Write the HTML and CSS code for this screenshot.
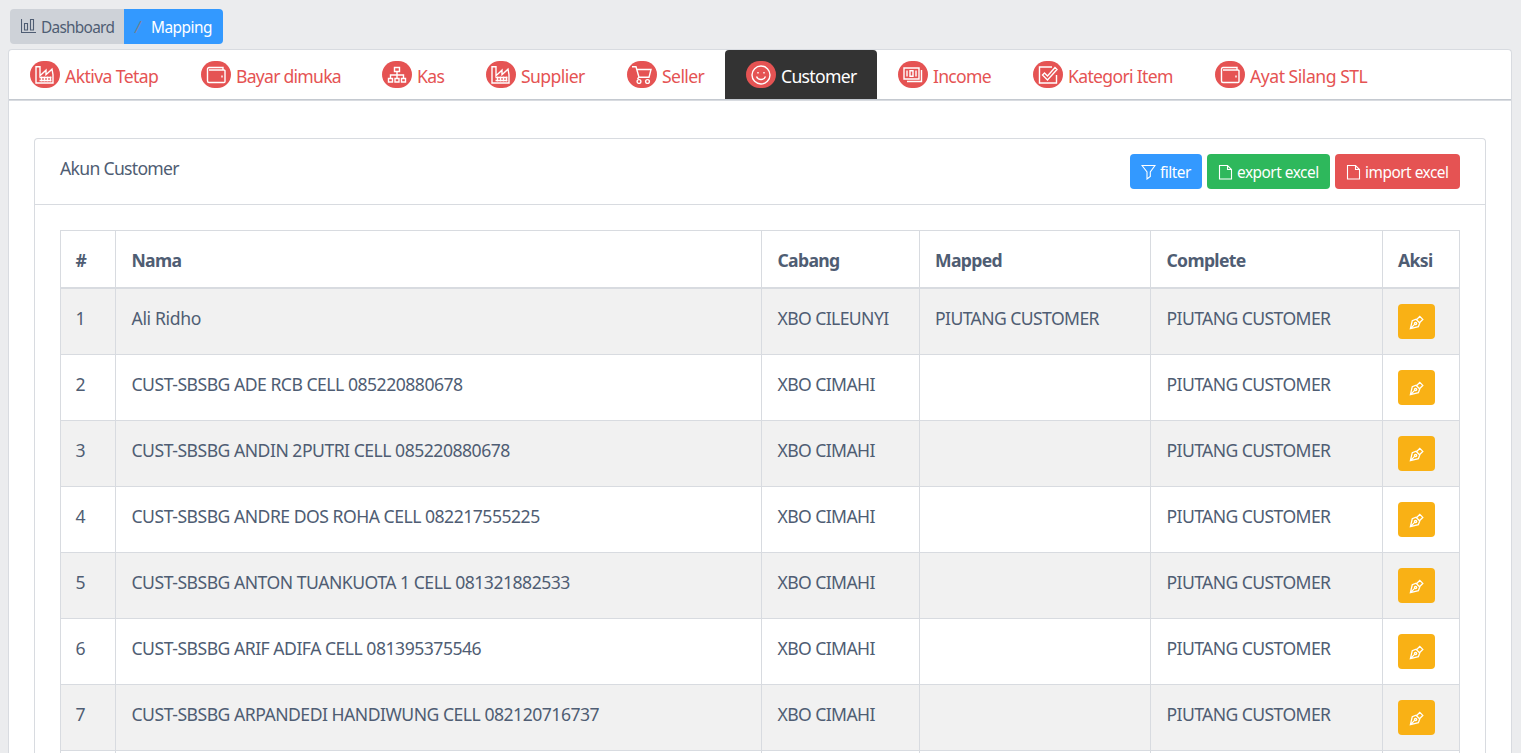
FILE: index.html
```html
<!DOCTYPE html>
<html lang="id">
<head>
<meta charset="utf-8">
<title>Mapping</title>
<link rel="stylesheet" href="styles.css">
</head>
<body>
<svg class="sprite" aria-hidden="true">
  <symbol id="factory" viewBox="0 0 20 18"><path d="M1 17V.7h4v9l6-5.500v4.500l6-5.500 1 5.500v8.300zM4.500 11.500h12M4.500 14.500h12M6.500 10.500v5M9.500 10.500v5M12.500 10.500v5M15.500 10.500v5"/></symbol>
  <symbol id="wallet" viewBox="0 0 20 18"><path d="M17 4V1.500H3A1.500 1.500 0 0 0 1.500 3v12A1.500 1.500 0 0 0 3 16.500h15a1 1 0 0 0 1-1V5a1 1 0 0 0-1-1H3M16 9.500v2"/></symbol>
  <symbol id="tree" viewBox="0 0 20 18"><path d="M7.500 1.500h5v4h-5zM10 6v6M3.500 12V9h13v3M1.500 12.500h4v3.500h-4zM8 12.500h4v3.500H8zM14.500 12.500h4v3.500h-4z"/></symbol>
  <symbol id="cart" viewBox="0 0 20 18"><path d="M0 .8h4l3 10.500h10l2-7.800H5M7 11l-1.500 2"/><circle cx="7" cy="15.500" r="1.900"/><circle cx="15.500" cy="15.500" r="1.900"/></symbol>
  <symbol id="smile" viewBox="0 0 20 20"><circle cx="10" cy="10" r="9"/><path d="M5.500 11.500c1.500 4 7.500 4 9 0M7 7v1.500M13 7v1.500"/></symbol>
  <symbol id="money" viewBox="0 0 20 18"><path d="M1 2h15v11H1zM18.500 4v11.500H4M4 4.500v6M13 4.500v6M7 4.800h3v5.400H7z"/></symbol>
  <symbol id="check" viewBox="0 0 20 18"><path d="M14 1H1.500v16h17V9M4.500 9l2-2 3 3 7.500-8.500 2 2L9.500 14z"/></symbol>
  <symbol id="chart" viewBox="0 0 16 15"><path d="M.5 0v13.500H15M3.500 4.500h3V11h-3zM9.500.5h3V11h-3z"/></symbol>
  <symbol id="funnel" viewBox="0 0 15 16"><path d="M1 1.500h13L9.300 8v4.500L6 15V8z"/></symbol>
  <symbol id="file" viewBox="0 0 15 16"><path d="M1.500 1.500h8l4 4v9.500h-12zM9.500 1.500v4h4"/></symbol>
  <symbol id="pen" viewBox="0 0 16 16"><path d="M1.500 14.500l2-8.500 4-1.500 4 4-1.500 4zM1.500 14.500l4.500-4.500M8.500 4.500l3-3 3.200 3.200-3 3"/><circle cx="7" cy="9" r="1.200"/></symbol>
</svg>
<nav class="crumbs">
  <a class="crumb"><svg class="crumb-icon"><use href="#chart"/></svg><span>Dashboard</span></a>
  <a class="crumb current"><i>/</i><span>Mapping</span></a>
</nav>
<main class="panel">
  <ul class="tabs">
    <li class="tab t1"><b class="badge"><svg><use href="#factory"/></svg></b><span>Aktiva Tetap</span></li>
    <li class="tab t2"><b class="badge"><svg><use href="#wallet"/></svg></b><span>Bayar dimuka</span></li>
    <li class="tab t3"><b class="badge"><svg><use href="#tree"/></svg></b><span>Kas</span></li>
    <li class="tab t4"><b class="badge"><svg><use href="#factory"/></svg></b><span>Supplier</span></li>
    <li class="tab t5"><b class="badge"><svg><use href="#cart"/></svg></b><span>Seller</span></li>
    <li class="tab t6 active"><b class="badge"><svg class="round"><use href="#smile"/></svg></b><span>Customer</span></li>
    <li class="tab t7"><b class="badge"><svg><use href="#money"/></svg></b><span>Income</span></li>
    <li class="tab t8"><b class="badge"><svg><use href="#check"/></svg></b><span>Kategori Item</span></li>
    <li class="tab t9"><b class="badge"><svg><use href="#wallet"/></svg></b><span>Ayat Silang STL</span></li>
  </ul>
  <section class="card">
    <header class="card-head">
      <h1>Akun Customer</h1>
      <div class="actions">
        <button class="btn blue"><svg><use href="#funnel"/></svg><span>filter</span></button>
        <button class="btn green"><svg><use href="#file"/></svg><span>export excel</span></button>
        <button class="btn red"><svg><use href="#file"/></svg><span>import excel</span></button>
      </div>
    </header>
    <table>
      <colgroup><col class="c-no"><col class="c-name"><col class="c-branch"><col class="c-mapped"><col class="c-complete"><col class="c-action"></colgroup>
      <thead><tr><th>#</th><th>Nama</th><th>Cabang</th><th>Mapped</th><th>Complete</th><th>Aksi</th></tr></thead>
      <tbody>
        <tr><td>1</td><td class="person">Ali Ridho</td><td>XBO CILEUNYI</td><td>PIUTANG CUSTOMER</td><td>PIUTANG CUSTOMER</td><td><button class="edit"><svg><use href="#pen"/></svg></button></td></tr>
        <tr><td>2</td><td>CUST-SBSBG ADE RCB CELL 085220880678</td><td>XBO CIMAHI</td><td></td><td>PIUTANG CUSTOMER</td><td><button class="edit"><svg><use href="#pen"/></svg></button></td></tr>
        <tr><td>3</td><td>CUST-SBSBG ANDIN 2PUTRI CELL 085220880678</td><td>XBO CIMAHI</td><td></td><td>PIUTANG CUSTOMER</td><td><button class="edit"><svg><use href="#pen"/></svg></button></td></tr>
        <tr><td>4</td><td>CUST-SBSBG ANDRE DOS ROHA CELL 082217555225</td><td>XBO CIMAHI</td><td></td><td>PIUTANG CUSTOMER</td><td><button class="edit"><svg><use href="#pen"/></svg></button></td></tr>
        <tr><td>5</td><td>CUST-SBSBG ANTON TUANKUOTA 1 CELL 081321882533</td><td>XBO CIMAHI</td><td></td><td>PIUTANG CUSTOMER</td><td><button class="edit"><svg><use href="#pen"/></svg></button></td></tr>
        <tr><td>6</td><td>CUST-SBSBG ARIF ADIFA CELL 081395375546</td><td>XBO CIMAHI</td><td></td><td>PIUTANG CUSTOMER</td><td><button class="edit"><svg><use href="#pen"/></svg></button></td></tr>
        <tr><td>7</td><td>CUST-SBSBG ARPANDEDI HANDIWUNG CELL 082120716737</td><td>XBO CIMAHI</td><td></td><td>PIUTANG CUSTOMER</td><td><button class="edit"><svg><use href="#pen"/></svg></button></td></tr>
        <tr class="last"><td></td><td></td><td></td><td></td><td></td><td></td></tr>
      </tbody>
    </table>
  </section>
</main>
</body>
</html>
```
FILE: styles.css
```css
* { box-sizing: border-box; }
html { height: 100%; overflow: hidden; }
body {
  margin: 0;
  height: 753px;
  overflow: hidden;
  padding: 9px 9px 0 8px;
  background: #ebecee;
  color: #4f5d73;
  font-family: "Noto Sans", "Open Sans", sans-serif;
  font-size: 17.6px;
  letter-spacing: -.5px;
}
.sprite { display: none; }
svg { fill: none; stroke: currentColor; flex: none; }
button { border: 0; font-family: inherit; }
.crumbs {
  display: flex;
  width: 213px;
  height: 35px;
  margin-left: 2px;
  border-radius: 4px;
  overflow: hidden;
  font-size: 15.4px;
}
.crumb {
  display: flex;
  align-items: center;
  width: 114px;
  padding: 1px 0 0 11px;
  background: #ced2d8;
  letter-spacing: -.72px;
  white-space: nowrap;
}
.crumb-icon { width: 16px; height: 15px; margin: -1px 4px 0 0; stroke-width: 1.1; }
.crumb.current { width: 99px; background: #39f; color: #fff; letter-spacing: -.5px; }
.crumb i { width: 16px; color: #768192; }
.panel {
  height: 704px;
  margin-top: 5px;
  border: 1px solid #d8dbe0;
  border-bottom: 0;
  border-radius: 4px 4px 0 0;
  background: #fff;
}
.tabs {
  display: flex;
  height: 51px;
  margin: 0;
  padding: 0;
  list-style: none;
  border-bottom: 1px solid #d8dbe0;
  box-shadow: inset 0 -1px #c4c9d0;
  color: #e55353;
}
.tab {
  display: flex;
  align-items: center;
  height: 49px;
  padding: 0 0 0 21px;
  letter-spacing: -.6px;
  white-space: nowrap;
}
.tab span { padding-top: 3px; }
.t1 { width: 171px; }
.t2 { width: 181px; letter-spacing: -.75px; }
.t3 { width: 104px; }
.t4 { width: 141px; }
.t5 { width: 119px; }
.t6 { width: 152px; letter-spacing: -.7px; }
.t7 { width: 135px; letter-spacing: -.75px; }
.t8 { width: 182px; letter-spacing: -.68px; }
.t9 { width: 195px; letter-spacing: -.48px; }
.tab.active { background: #333; color: #fff; border-radius: 4px 4px 0 0; }
.badge {
  display: flex;
  align-items: center;
  justify-content: center;
  width: 30px;
  height: 27px;
  margin-right: 5px;
  border-radius: 14px;
  background: #e55353;
  color: #fff;
}
.badge svg { width: 20px; height: 18px; stroke-width: 1.4; }
.badge .round { height: 20px; }
.card {
  width: 1452px;
  height: 615px;
  margin: 37px 0 0 25px;
  border: 1px solid #d8dbe0;
  border-bottom: 0;
  border-radius: 4px 4px 0 0;
}
.card-head {
  display: flex;
  justify-content: space-between;
  height: 66px;
  padding: 15px 25px 0;
  border-bottom: 1px solid #d8dbe0;
}
h1 { margin: 0; font-size: 17.6px; font-weight: 400; line-height: 28px; letter-spacing: -.7px; }
.actions { display: flex; gap: 5px; }
.btn {
  display: flex;
  align-items: center;
  height: 35px;
  padding: 0 0 0 11px;
  border-radius: 4px;
  color: #fff;
  font-size: 15.4px;
  letter-spacing: -.48px;
  white-space: nowrap;
}
.btn svg { width: 15px; height: 16px; margin-right: 4px; stroke-width: 1.1; }
.btn span { padding-top: 1px; }
.blue { width: 72px; background: #39f; }
.green { width: 123px; background: #2eb85c; }
.red { width: 125px; background: #e55353; }
table {
  width: 1400px;
  margin: 25px 0 0 25px;
  table-layout: fixed;
  border-collapse: separate;
  border-spacing: 0;
  border: solid #d8dbe0;
  border-width: 1px 0 0 1px;
}
.c-no { width: 55px; }
.c-name { width: 646px; }
.c-branch { width: 158px; }
.c-mapped { width: 231px; }
.c-complete { width: 232px; }
.c-action { width: 77px; }
th, td {
  padding: 15px 0 0 15.500px;
  border: solid #d8dbe0;
  border-width: 0 1px 1px 0;
  text-align: left;
  vertical-align: top;
  line-height: 28px;
  white-space: nowrap;
}
th:first-child, td:first-child { padding-left: 14.500px; }
th:nth-child(4), td:nth-child(4), th:last-child, td:last-child { padding-left: 15px; }
td:nth-child(n+3) { letter-spacing: -.6px; }
td.person { letter-spacing: -.35px; }
th { height: 58px; border-bottom-width: 2px; letter-spacing: -.68px; }
td { height: 66px; }
.last td { height: 2px; padding: 0; border-bottom: 0; }
tbody tr:nth-child(odd) { background: #f1f1f1; }
tbody tr.last { background: #fff; }
.edit {
  display: flex;
  align-items: center;
  justify-content: center;
  width: 37px;
  height: 35px;
  padding: 0;
  border-radius: 4px;
  background: #f9b115;
  color: #fff;
}
.edit svg { width: 15px; height: 15px; stroke-width: 1.4; margin-top: 1px; }
```
